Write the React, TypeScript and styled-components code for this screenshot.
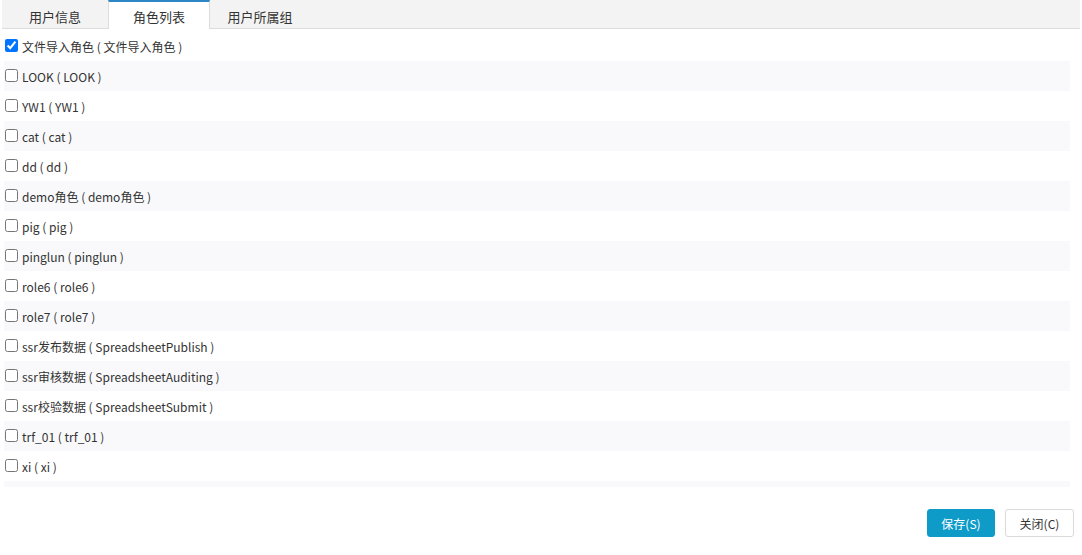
import styled, { createGlobalStyle } from "styled-components";
import { useState } from "react";

const roles = [
  "文件导入角色",
  "LOOK",
  "YW1",
  "cat",
  "dd",
  "demo角色",
  "pig",
  "pinglun",
  "role6",
  "role7",
  ["ssr发布数据", "SpreadsheetPublish"],
  ["ssr审核数据", "SpreadsheetAuditing"],
  ["ssr校验数据", "SpreadsheetSubmit"],
  "trf_01",
  "xi",
];

const tabs = [
  { label: "用户信息", width: 106 },
  { label: "角色列表", width: 102 },
  { label: "用户所属组", width: 100 },
];

export default function App() {
  const [activeTab, setActiveTab] = useState(1);
  const [checked, setChecked] = useState<Record<number, boolean>>({ 0: true });

  return (
    <Page>
      <GlobalStyle />
      <TabBar>
        {tabs.map((tab, i) => (
          <Tab
            key={tab.label}
            $width={tab.width}
            $active={i === activeTab}
            onClick={() => setActiveTab(i)}
          >
            {tab.label}
          </Tab>
        ))}
      </TabBar>
      <RoleList>
        {roles.map((role, i) => {
          const [name, code] = Array.isArray(role) ? role : [role, role];
          return (
            <RoleRow key={name} $striped={i % 2 === 1}>
              <label>
                <input
                  type="checkbox"
                  checked={!!checked[i]}
                  onChange={() => setChecked({ ...checked, [i]: !checked[i] })}
                />
                {name} ( {code} )
              </label>
            </RoleRow>
          );
        })}
      </RoleList>
      <Footer>
        <PrimaryButton>保存(S)</PrimaryButton>
        <Button>关闭(C)</Button>
      </Footer>
    </Page>
  );
}

const GlobalStyle = createGlobalStyle`
  body {
    margin: 0;
    background: #fff;
    font-family: "Microsoft YaHei", "Noto Sans CJK SC", sans-serif;
    color: #333;
  }
`;

const Page = styled.div`
  width: 1082px;
  height: 555px;
  display: flex;
  flex-direction: column;
`;

const TabBar = styled.div`
  display: flex;
  height: 28px;
  margin: 0 2px;
  background: #f3f3f3;
  border-bottom: 1px solid #dcdcdc;
`;

const Tab = styled.div<{ $active: boolean; $width: number }>`
  width: ${({ $width }) => $width}px;
  display: flex;
  align-items: center;
  justify-content: center;
  font-size: 13px;
  color: #333;
  cursor: pointer;
  box-sizing: border-box;
  ${({ $active }) =>
    $active
      ? `
    background: #fff;
    border-top: 2px solid #2b86c5;
    border-left: 1px solid #dcdcdc;
    border-right: 1px solid #dcdcdc;
    margin-bottom: -1px;
    height: 29px;
    padding-top: 1px;
  `
      : `
    padding-top: 4px;
  `}
`;

const RoleList = styled.div`
  height: 456px;
  margin: 2px 12px 0 4px;
  overflow: hidden;

  &::after {
    content: "";
    display: block;
    height: 30px;
    background: #f9f9fb;
  }
`;

const RoleRow = styled.div<{ $striped: boolean }>`
  height: 30px;
  display: flex;
  align-items: center;
  background: ${({ $striped }) => ($striped ? "#f9f9fb" : "#fff")};
  font-size: 12px;
  color: #333;

  label {
    display: flex;
    align-items: center;
    cursor: pointer;
  }

  input {
    width: 13px;
    height: 13px;
    margin: 0 4px 2px 1px;
  }
`;

const Footer = styled.div`
  display: flex;
  justify-content: flex-end;
  gap: 10px;
  padding: 22px 8px 0 0;
`;

const Button = styled.button`
  height: 28px;
  width: 69px;
  font-family: "Microsoft YaHei", "Noto Sans CJK SC", sans-serif;
  font-size: 12px;
  color: #333;
  background: #fff;
  border: 1px solid #dadada;
  border-radius: 3px;
  cursor: pointer;
`;

const PrimaryButton = styled(Button)`
  width: 68px;
  color: #fff;
  background: #0e9bc8;
  border-color: #0e9bc8;
`;
